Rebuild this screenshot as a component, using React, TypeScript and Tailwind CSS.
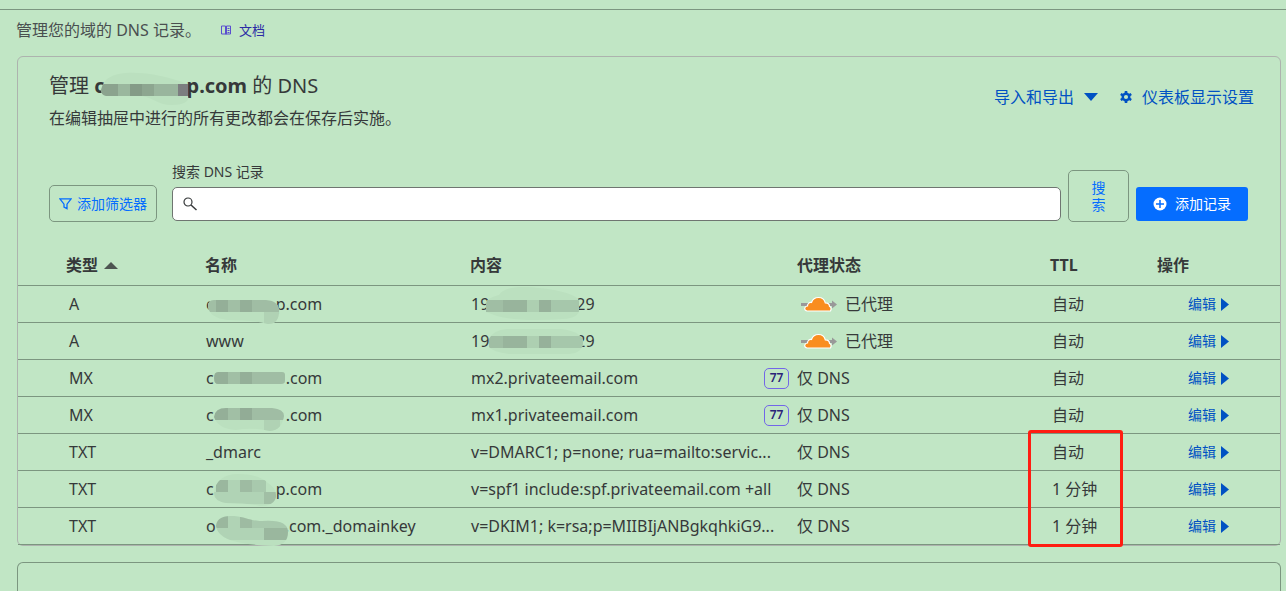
import { useId } from 'react';

type Block = [x: number, y: number, width: number, height: number, fill: string];

type Patch = {
  width: number;
  outline: string;
  blocks: Block[];
};

type DnsRecord = {
  type: string;
  name: string[];
  namePatch?: Patch;
  content: string[];
  contentPatch?: Patch;
  priority?: number;
  proxied?: boolean;
  ttl: string;
};

const titlePatch: Patch = {
  width: 82,
  outline: 'M-4 18C-1 6 7 2 21 1C43 0 63 5 83 12V24C85 30 77 33 67 33C53 33 49 26 37 24H1Q-4 23-4 18Z',
  blocks: [
    [-5, 12, 18, 12, '#8ba38e'],
    [13, 12, 12, 12, '#9ab79e'],
    [25, 12, 12, 12, '#849b87'],
    [37, 12, 12, 12, '#8da690'],
    [49, 12, 24, 12, '#99b59d'],
    [73, 12, 12, 12, '#7c7e80'],
  ],
};

const patches: Record<string, Patch> = {
  nameA: {
    width: 62,
    outline: 'M-6 20Q-6 14 0 14H52Q65 15 65 25Q65 38 54 38Q40 34 14 34Q-5 32-6 20Z',
    blocks: [
      [-6, 14, 8, 12, '#a1bfa5'],
      [2, 14, 12, 12, '#94af98'],
      [14, 14, 12, 12, '#a1bfa5'],
      [26, 14, 12, 12, '#94af98'],
      [38, 14, 28, 12, '#a0bda4'],
      [50, 26, 15, 12, '#b0d2b4'],
    ],
  },
  nameMx2: {
    width: 72,
    outline: 'M0 18Q0 12 4 12H68Q71 12 71 15V21Q71 24 67 24H4Q0 24 0 18Z',
    blocks: [
      [0, 12, 14, 12, '#94af98'],
      [14, 12, 12, 12, '#a1bfa5'],
      [26, 12, 12, 12, '#94af98'],
      [38, 12, 34, 12, '#a0bda4'],
    ],
  },
  nameMx1: {
    width: 72,
    outline: 'M0 20Q1 11 12 11H58Q70 12 70 19Q68 33 56 34Q38 30 22 33Q4 32 0 20Z',
    blocks: [
      [0, 11, 14, 12, '#94af98'],
      [14, 11, 12, 12, '#a1bfa5'],
      [26, 11, 12, 12, '#92ac96'],
      [38, 11, 34, 12, '#a0bda4'],
      [50, 23, 16, 12, '#b0d2b4'],
    ],
  },
  nameSpf: {
    width: 62,
    outline: 'M0 22C1 10 10 3 24 3Q44 3 54 12Q63 18 62 26Q60 35 46 35Q34 32 12 32Q0 30 0 22Z',
    blocks: [
      [0, 21, 50, 12, '#b0d3b5'],
      [2, 9, 12, 12, '#9ab79e'],
      [14, 9, 12, 12, '#b0d3b5'],
      [26, 9, 12, 12, '#9ebba2'],
      [38, 9, 14, 12, '#a8c9ad'],
      [50, 21, 12, 12, '#a1bfa5'],
    ],
  },
  nameDkim: {
    width: 69,
    outline: 'M0 18C1 9 8 8 18 8C30 9 34 13 46 13Q72 11 72 24Q72 37 58 38Q36 37 26 35Q2 31 0 18Z',
    blocks: [
      [0, 20, 50, 12, '#b0d3b5'],
      [0, 8, 12, 12, '#9ab79e'],
      [12, 8, 12, 12, '#b0d3b5'],
      [24, 8, 12, 12, '#9ebba2'],
      [36, 8, 36, 12, '#a8c9ad'],
      [48, 20, 24, 12, '#9ab79e'],
    ],
  },
  contentApex: {
    width: 87,
    outline: 'M-3 18Q-3 12 10 9Q14 2 30 1C52 0 90 7 90 15V24Q90 32 74 33Q30 36 8 30L-3 26Z',
    blocks: [
      [-3, 14, 17, 12, '#a0bea4'],
      [14, 14, 24, 12, '#98b49c'],
      [38, 14, 12, 12, '#adcfb1'],
      [50, 14, 12, 12, '#96b19a'],
      [62, 14, 28, 12, '#a6c7ab'],
    ],
  },
  contentWww: {
    width: 87,
    outline: 'M0 16Q4 7 18 6H72Q94 9 94 19Q94 30 80 31H20Q4 29 0 24Z',
    blocks: [
      [0, 13, 14, 12, '#a0bea4'],
      [14, 13, 24, 12, '#98b49c'],
      [38, 13, 12, 12, '#adcfb1'],
      [50, 13, 12, 12, '#96b19a'],
      [62, 13, 34, 12, '#a6c7ab'],
    ],
  },
};

const records: DnsRecord[] = [
  {
    type: 'A',
    name: ['c', 'p.com'],
    namePatch: patches.nameA,
    content: ['19', '29'],
    contentPatch: patches.contentApex,
    proxied: true,
    ttl: '自动',
  },
  {
    type: 'A',
    name: ['www'],
    content: ['19', '29'],
    contentPatch: patches.contentWww,
    proxied: true,
    ttl: '自动',
  },
  {
    type: 'MX',
    name: ['c', '.com'],
    namePatch: patches.nameMx2,
    content: ['mx2.privateemail.com'],
    priority: 77,
    ttl: '自动',
  },
  {
    type: 'MX',
    name: ['c', '.com'],
    namePatch: patches.nameMx1,
    content: ['mx1.privateemail.com'],
    priority: 77,
    ttl: '自动',
  },
  { type: 'TXT', name: ['_dmarc'], content: ['v=DMARC1; p=none; rua=mailto:servic...'], ttl: '自动' },
  {
    type: 'TXT',
    name: ['c', 'p.com'],
    namePatch: patches.nameSpf,
    content: ['v=spf1 include:spf.privateemail.com +all'],
    ttl: '1 分钟',
  },
  {
    type: 'TXT',
    name: ['o', '.com._domainkey'],
    namePatch: patches.nameDkim,
    content: ['v=DKIM1; k=rsa;p=MIIBIjANBgkqhkiG9...'],
    ttl: '1 分钟',
  },
];

function Mosaic({ patch, height }: { patch: Patch; height: number }) {
  const id = useId();
  return (
    <svg width={patch.width} height={height} className="relative shrink-0 overflow-visible" aria-hidden="true">
      <clipPath id={id}>
        <path d={patch.outline} />
      </clipPath>
      <path d={patch.outline} fill="#bbe0bf" />
      <g clipPath={`url(#${id})`}>
        {patch.blocks.map(([x, y, w, h, fill]) => (
          <rect key={`${x}-${y}`} x={x} y={y} width={w} height={h} fill={fill} />
        ))}
      </g>
    </svg>
  );
}

function MaskedText({ parts, patch }: { parts: string[]; patch?: Patch }) {
  return (
    <span className="flex h-9 items-center whitespace-nowrap">
      {parts[0]}
      {patch && <Mosaic patch={patch} height={36} />}
      {parts[1]}
    </span>
  );
}

function ProxyCloud() {
  return (
    <svg width="36" height="16" viewBox="0 0 36 16" aria-hidden="true">
      <path d="M0 7h31V4.500L36 8.500l-5 4V10H0z" fill="#999" />
      <path
        d="M6 15C4 14.600 3.200 13 4 11.500c.5-1 1.500-1.500 2.500-1.500C6.500 7.500 8.500 6 10.500 6.500 11.500 3.500 14 1.500 17.500 1.500c3.500 0 6 2 6.800 5.300 2.700 0 4.200 1.500 4.200 3.500 1.500.8 2 2.700 1 4.700z"
        fill="#f98d1f"
        stroke="#fff"
        strokeWidth="1.200"
      />
    </svg>
  );
}

function BookIcon() {
  return (
    <svg width="10" height="10" viewBox="0 0 10 10" fill="none" stroke="#5a4fcf" aria-hidden="true">
      <path d="M.5 1h4v8h-4zM5.500 1h4v8h-4zM6.500 3.500h2M6.500 5.500h2M6.500 7.500h2M5 1v9" />
    </svg>
  );
}

function GearIcon() {
  return (
    <svg width="12" height="12" viewBox="0 0 14 14" fill="none" stroke="currentColor" aria-hidden="true">
      <circle cx="7" cy="7" r="3.800" strokeWidth="2.800" />
      <path
        d="M7 0v3M7 11v3M.9 3.500l2.600 1.500M10.500 9l2.600 1.500M.9 10.500L3.500 9M10.500 5l2.600-1.500"
        strokeWidth="3"
      />
    </svg>
  );
}

export default function App() {
  return (
    <div className="min-h-screen bg-[#c1e6c5] pt-[9px] text-base text-[#36393a] font-['Noto_Sans','Noto_Sans_CJK_SC',sans-serif]">
      {/* Page intro */}
      <div className="flex h-[47px] items-start gap-5 border-t border-[#7c9680] pt-2 pl-4">
        <p className="leading-6 text-[#4a4f50]">管理您的域的 DNS 记录。</p>
        <a href="#docs" className="flex items-center gap-2 text-[13px] leading-6 text-[#2b2ba5]">
          <BookIcon />
          文档
        </a>
      </div>

      <section className="ml-[17px] mr-[5px] rounded-md border border-[#adb3ae]">
        <header className="flex items-start justify-between pt-[15px] pr-[26px] pl-[31px]">
          <div>
            <h2 className="flex h-7 items-center text-xl leading-7 whitespace-pre">
              管理 <strong>c</strong>
              <Mosaic patch={titlePatch} height={28} />
              <strong>p.com</strong> 的 DNS
            </h2>
            <p className="mt-1 leading-7">在编辑抽屉中进行的所有更改都会在保存后实施。</p>
          </div>
          <div className="flex items-center gap-[22px] pt-[13px] leading-6 text-[#0051c3]">
            <button type="button" className="flex items-center gap-[10px]">
              导入和导出
              <svg width="14" height="8" viewBox="0 0 14 8" fill="currentColor" aria-hidden="true">
                <path d="M0 0h14L7 8z" />
              </svg>
            </button>
            <button type="button" className="flex items-center gap-[10px]">
              <GearIcon />
              仪表板显示设置
            </button>
          </div>
        </header>

        {/* Filters and search */}
        <form className="mt-[30px] flex items-end gap-[7px] pr-8 pl-[31px]" onSubmit={(e) => e.preventDefault()}>
          <button
            type="button"
            className="mr-2 flex h-[37px] w-[108px] shrink-0 items-center justify-center gap-[5px] rounded-[5px] border border-[#7c9680] text-sm text-[#056dff]"
          >
            <svg width="13" height="12" viewBox="0 0 13 12" fill="none" stroke="currentColor" aria-hidden="true">
              <path d="M.9.9h11.200L8 6.200v4.500l-3-1.500v-3z" strokeWidth="1.300" />
            </svg>
            添加筛选器
          </button>
          <div className="mb-px min-w-0 flex-1">
            <label htmlFor="dns-search" className="block text-sm leading-5">
              搜索 DNS 记录
            </label>
            <div className="relative mt-[5px]">
              <svg
                className="absolute top-[10px] left-[11px]"
                width="14"
                height="14"
                viewBox="0 0 14 14"
                fill="none"
                stroke="#36393a"
                aria-hidden="true"
              >
                <circle cx="5" cy="5" r="4" strokeWidth="1.200" />
                <path d="M8 8l5.500 5" strokeWidth="1.500" />
              </svg>
              <input
                id="dns-search"
                type="text"
                className="block h-[34px] w-full rounded-[5px] border border-[#6f7571] bg-white pr-3 pl-9 outline-none"
              />
            </div>
          </div>
          <button
            type="submit"
            className="h-[52px] w-[61px] shrink-0 rounded-[5px] border border-[#7c9680] px-[22px] text-sm leading-[17px] text-[#056dff]"
          >
            搜索
          </button>
          <button
            type="button"
            className="mb-px flex h-[34px] w-28 shrink-0 items-center justify-center gap-2 rounded-[3px] bg-[#056dff] text-sm text-white"
          >
            <svg width="14" height="14" viewBox="0 0 14 14" aria-hidden="true">
              <circle cx="7" cy="7" r="6.500" fill="#fff" />
              <path d="M7 3v8M3 7h8" stroke="#056dff" strokeWidth="1.500" />
            </svg>
            添加记录
          </button>
        </form>

        {/* Records */}
        <table className="mt-[23px] w-full table-fixed border-separate border-spacing-0 text-left">
          <colgroup>
            <col className="w-[172px]" />
            <col className="w-[265px]" />
            <col />
            <col className="w-[237px]" />
            <col className="w-[108px]" />
            <col className="w-[138px]" />
          </colgroup>
          <thead>
            <tr className="h-[41px] *:border-b *:border-[#7c9680] *:p-0 *:font-bold">
              <th scope="col">
                <span className="flex items-center gap-[6px] pl-12">
                  类型
                  <svg width="14" height="7" viewBox="0 0 14 7" fill="#4d5551" aria-hidden="true">
                    <path d="M0 7h14L7 0z" />
                  </svg>
                </span>
              </th>
              <th scope="col"><span className="pl-[15px]">名称</span></th>
              <th scope="col"><span className="pl-[15px]">内容</span></th>
              <th scope="col">代理状态</th>
              <th scope="col"><span className="pl-4">TTL</span></th>
              <th scope="col"><span className="pl-[15px]">操作</span></th>
            </tr>
          </thead>
          <tbody>
            {records.map((record, i) => (
              <tr key={i} className="h-[37px] *:border-b *:border-[#7c9680] *:p-0">
                <td><span className="pl-[51px]">{record.type}</span></td>
                <td>
                  <div className="pl-4">
                    <MaskedText parts={record.name} patch={record.namePatch} />
                  </div>
                </td>
                <td>
                  <div className="flex items-center justify-between pr-2 pl-4">
                    <MaskedText parts={record.content} patch={record.contentPatch} />
                    {record.priority && (
                      <span className="flex h-[21px] w-[25px] items-center justify-center rounded-[5px] border border-[#7366e8] text-xs font-semibold text-[#2a2378]">
                        {record.priority}
                      </span>
                    )}
                  </div>
                </td>
                <td>
                  {record.proxied ? (
                    <span className="flex items-center gap-2 pl-1">
                      <ProxyCloud />
                      已代理
                    </span>
                  ) : (
                    '仅 DNS'
                  )}
                </td>
                <td className="relative">
                  <span className="pl-[18px]">{record.ttl}</span>
                  {/* Highlight around the last three TTL values */}
                  {i === 4 && (
                    <span className="pointer-events-none absolute -top-1 -left-[6px] z-10 h-[117px] w-[95px] rounded-[3px] border-3 border-[#ff1d12]" />
                  )}
                </td>
                <td>
                  <a href="#edit" className="flex items-center gap-[5px] pl-[46px] text-sm text-[#0051c3]">
                    编辑
                    <svg width="8" height="13" viewBox="0 0 8 13" fill="currentColor" aria-hidden="true">
                      <path d="M0 0l8 6.500L0 13z" />
                    </svg>
                  </a>
                </td>
              </tr>
            ))}
          </tbody>
        </table>
      </section>

      <section className="mt-4 ml-[17px] mr-[5px] h-[29px] rounded-t-md border border-b-0 border-[#7c9680]" />
    </div>
  );
}
